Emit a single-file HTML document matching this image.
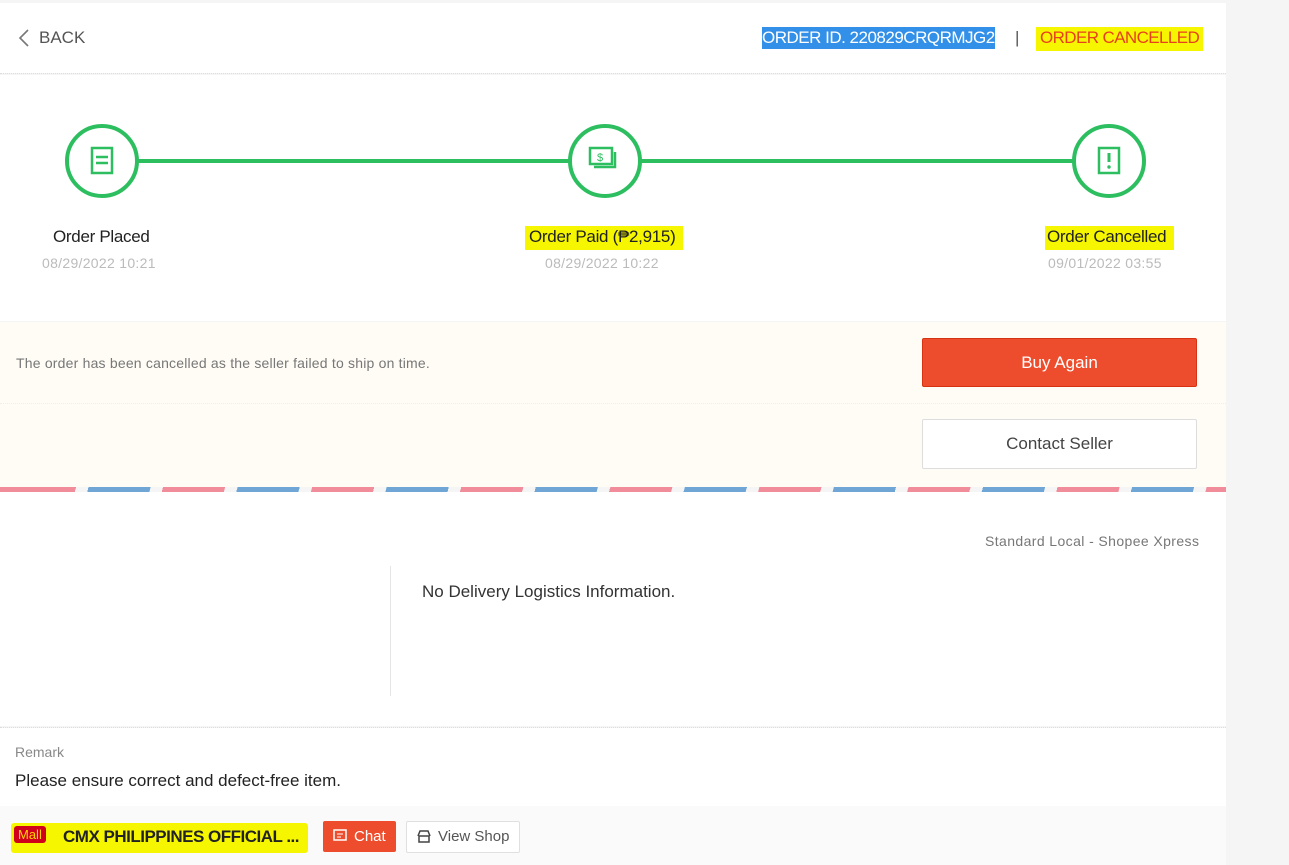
<!DOCTYPE html><html><head><style>
body{margin:0;width:1289px;height:865px;background:#f5f5f5;font-family:"Liberation Sans",sans-serif;position:relative;overflow:hidden}
.a{position:absolute}
.card{background:#fff;left:0;width:1226px}
.t{position:absolute;white-space:nowrap}
.circ{position:absolute;width:66px;height:66px;border:4px solid #2dbe60;border-radius:50%;background:#fff;top:124px}
.hl{background:#f6f600}
</style></head><body>
<div class="a card" style="top:3px;height:70px"></div>
<div class="a" style="left:0;top:73px;width:1226px;border-top:1px dotted #ddd"></div>
<svg class="a" style="left:16px;top:28px" width="16" height="20"><path d="M12 2 L4 10 L12 18" stroke="#777" stroke-width="1.6" fill="none"/></svg>
<div class="t" style="left:39px;top:28px;font-size:17px;color:#555">BACK</div>
<div class="t" style="left:762px;top:27px;font-size:17px;color:#fff;background:#3390e8;padding:1px 0;letter-spacing:-0.5px">ORDER ID. 220829CRQRMJG2</div>
<div class="t" style="left:1015px;top:28px;font-size:17px;color:#555">|</div>
<div class="t hl" style="left:1036px;top:27px;font-size:17px;color:#e8401e;padding:1px 4px 3px 4px;letter-spacing:-0.6px">ORDER CANCELLED</div>

<div class="a card" style="top:75px;height:246px"></div>
<div class="a" style="left:138px;top:159px;width:935px;height:4px;background:#2dbe60"></div>
<div class="circ" style="left:65px"><svg width="66" height="66"><rect x="23" y="20" width="20" height="25" fill="none" stroke="#2dbe60" stroke-width="2.5"/><line x1="27" y1="29" x2="39" y2="29" stroke="#2dbe60" stroke-width="2.5"/><line x1="27" y1="35" x2="39" y2="35" stroke="#2dbe60" stroke-width="2.5"/></svg></div>
<div class="circ" style="left:568px"><svg width="66" height="66"><rect x="18" y="20" width="22" height="16" fill="none" stroke="#2dbe60" stroke-width="2.5"/><path d="M43 24v15H22" fill="none" stroke="#2dbe60" stroke-width="2.5"/><text x="25" y="33" font-size="11" fill="#2dbe60" font-family="Liberation Sans">$</text></svg></div>
<div class="circ" style="left:1072px"><svg width="66" height="66"><rect x="23" y="20" width="20" height="25" fill="none" stroke="#2dbe60" stroke-width="2.5"/><line x1="33" y1="25" x2="33" y2="34" stroke="#2dbe60" stroke-width="3"/><circle cx="33" cy="39" r="1.7" fill="#2dbe60"/></svg></div>
<div class="t" style="left:53px;top:227px;font-size:17px;color:#222;letter-spacing:-0.3px">Order Placed</div>
<div class="t" style="left:42px;top:255px;font-size:14px;color:#bbb;letter-spacing:0.3px">08/29/2022 10:21</div>
<div class="t hl" style="left:525px;top:226px;font-size:17px;color:#222;padding:1px 8px 3px 4px;letter-spacing:-0.3px">Order Paid (₱2,915)</div>
<div class="t" style="left:545px;top:255px;font-size:14px;color:#bbb;letter-spacing:0.3px">08/29/2022 10:22</div>
<div class="t hl" style="left:1045px;top:226px;font-size:17px;color:#222;padding:1px 8px 3px 2px;letter-spacing:-0.3px">Order Cancelled</div>
<div class="t" style="left:1048px;top:255px;font-size:14px;color:#bbb;letter-spacing:0.3px">09/01/2022 03:55</div>

<div class="a" style="left:0;top:322px;width:1226px;height:165px;background:#fffcf5"></div>
<div class="a" style="left:0;top:403px;width:1226px;border-top:1px dotted #eee"></div>
<div class="t" style="left:16px;top:355px;font-size:14px;color:#777;letter-spacing:0.2px">The order has been cancelled as the seller failed to ship on time.</div>
<div class="a" style="left:922px;top:338px;width:275px;height:49px;background:#ee4d2d;border-radius:2px;border:1px solid #d73211;box-sizing:border-box;color:#fff;font-size:17px;text-align:center;line-height:47px">Buy Again</div>
<div class="a" style="left:922px;top:419px;width:275px;height:50px;background:#fff;border:1px solid #ddd;border-radius:2px;box-sizing:border-box;color:#444;font-size:17px;text-align:center;line-height:48px">Contact Seller</div>
<div class="a" style="left:0;top:487px;width:1226px;height:5px;background:repeating-linear-gradient(105deg,#f18d9b 0 60px,transparent 60px 72px,#6fa6d6 72px 132px,transparent 132px 144px);background-position:14px 0"></div>

<div class="a card" style="top:492px;height:234px"></div>
<div class="t" style="left:985px;top:533px;font-size:14px;color:#777;letter-spacing:0.4px">Standard Local - Shopee Xpress</div>
<div class="a" style="left:390px;top:566px;width:1px;height:130px;background:#e5e5e5"></div>
<div class="t" style="left:422px;top:582px;font-size:17px;color:#333">No Delivery Logistics Information.</div>
<div class="a" style="left:0;top:727px;width:1226px;border-top:1px dotted #ddd"></div>
<div class="a card" style="top:728px;height:78px"></div>
<div class="t" style="left:15px;top:744px;font-size:14px;color:#888">Remark</div>
<div class="t" style="left:15px;top:771px;font-size:17px;color:#222">Please ensure correct and defect-free item.</div>
<div class="a" style="left:0;top:806px;width:1226px;height:59px;background:#fafafa"></div>
<div class="a hl" style="left:11px;top:823px;width:297px;height:30px;border-radius:3px"></div>
<div class="t" style="left:14px;top:826px;background:#d0011b;color:#ffd400;font-size:13px;padding:1px 4px;border-radius:3px">Mall</div>
<div class="t" style="left:63px;top:827px;font-size:17px;font-weight:bold;color:#222;letter-spacing:-0.5px">CMX PHILIPPINES OFFICIAL ...</div>
<div class="a" style="left:323px;top:821px;width:73px;height:31px;background:#ee4d2d;border-radius:2px;color:#fff;font-size:15px;line-height:31px"><svg class="a" style="left:10px;top:8px" width="14" height="14"><rect x="1" y="1" width="12" height="10" fill="none" stroke="#fff" stroke-width="1.5"/><line x1="4" y1="5" x2="10" y2="5" stroke="#fff"/><line x1="4" y1="8" x2="8" y2="8" stroke="#fff"/></svg><span class="a" style="left:31px">Chat</span></div>
<div class="a" style="left:406px;top:821px;width:112px;height:30px;background:#fff;border:1px solid #e0e0e0;border-radius:2px;color:#555;font-size:15px;line-height:30px"><svg class="a" style="left:10px;top:8px" width="14" height="14"><path d="M2 6h10v6H2z M1 6 L3 1h8l2 5" fill="none" stroke="#444" stroke-width="1.5"/></svg><span class="a" style="left:31px">View Shop</span></div>
</body></html>
